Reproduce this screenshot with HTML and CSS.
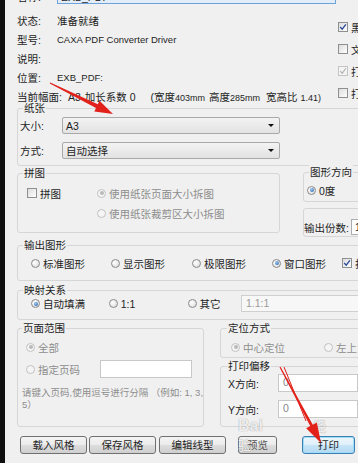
FILE: index.html
```html
<!DOCTYPE html>
<html lang="zh-CN">
<head>
    <meta charset="UTF-8">
    <meta name="viewport" content="width=device-width, initial-scale=1.0">
    <title>打印</title>
    <link rel="stylesheet" href="styles.css">
</head>
<body>
    <div class="dialog">
        <div class="info-band">
            <div class="info">
                <div class="row name-row"><span class="lbl">名称:</span><div class="name-box">EXB_PDF</div></div>
                <div class="row"><span class="lbl">状态:</span><span>准备就绪</span></div>
                <div class="row"><span class="lbl">型号:</span><span class="latin">CAXA PDF Converter Driver</span></div>
                <div class="row"><span class="lbl">说明:</span></div>
                <div class="row"><span class="lbl">位置:</span><span class="latin">EXB_PDF:</span></div>
                <div class="row size-row">
                    <span>当前幅面:</span>
                    <span class="s-a">A3</span>
                    <span class="s-b">加长系数 0</span>
                    <span class="s-c">(宽度<span class="num">403mm</span></span>
                    <span class="s-d">高度<span class="num">285mm</span></span>
                    <span class="s-e">宽高比 <span class="num">1.41)</span></span>
                </div>
            </div>
            <div class="side-checks">
                <div class="chk-row"><span class="chk on"><svg viewBox="0 0 10 10" width="8" height="8"><path d="M1.5 5 L4 7.8 L8.6 1.6" fill="none" stroke="#2c4a9a" stroke-width="1.6"/></svg></span>黑白打印</div>
                <div class="chk-row"><span class="chk"></span>文字作为填充</div>
                <div class="chk-row"><span class="chk dis on"><svg viewBox="0 0 10 10" width="8" height="8"><path d="M1.5 5 L4 7.8 L8.6 1.6" fill="none" stroke="#b0b0b0" stroke-width="1.4"/></svg></span>打印尺寸标识</div>
                <div class="chk-row"><span class="chk"></span>打印到文件</div>
            </div>
        </div>

        <div class="group paper">
            <div class="group-title">纸张</div>
            <div class="field-row"><span class="flbl">大小:</span><div class="select"><span>A3</span><span class="caret"></span></div></div>
            <div class="field-row"><span class="flbl">方式:</span><div class="select"><span>自动选择</span><span class="caret"></span></div></div>
        </div>

        <div class="row-c">
            <div class="group tile">
                <div class="group-title">拼图</div>
                <div class="tile-grid">
                    <div class="opt"><span class="chk"></span>拼图</div>
                    <div class="opt muted"><span class="radio dis on"></span>使用纸张页面大小拆图</div>
                    <div></div>
                    <div class="opt muted"><span class="radio dis"></span>使用纸张裁剪区大小拆图</div>
                </div>
            </div>
            <div class="right-c">
                <div class="group orient">
                    <div class="group-title">图形方向</div>
                    <div class="opt orient-row"><span class="radio on"></span>0度</div>
                </div>
                <div class="group copies">
                    <div class="opt"><span>输出份数:</span><span class="copies-box">1</span></div>
                </div>
            </div>
        </div>

        <div class="group out">
            <div class="group-title">输出图形</div>
            <div class="opts">
                <div class="opt w80"><span class="radio"></span>标准图形</div>
                <div class="opt w81"><span class="radio"></span>显示图形</div>
                <div class="opt w80"><span class="radio"></span>极限图形</div>
                <div class="opt w70"><span class="radio on"></span>窗口图形</div>
                <div class="opt"><span class="chk on"><svg viewBox="0 0 10 10" width="8" height="8"><path d="M1.5 5 L4 7.8 L8.6 1.6" fill="none" stroke="#2c4a9a" stroke-width="1.6"/></svg></span>打印</div>
            </div>
        </div>

        <div class="group map">
            <div class="group-title">映射关系</div>
            <div class="opts">
                <div class="opt w80"><span class="radio on"></span>自动填满</div>
                <div class="opt w81"><span class="radio"></span>1:1</div>
                <div class="opt w55"><span class="radio"></span>其它</div>
                <div class="text-box dis">1.1:1</div>
            </div>
        </div>

        <div class="row-f">
            <div class="group range">
                <div class="group-title">页面范围</div>
                <div class="opt range-row muted"><span class="radio dis on"></span>全部</div>
                <div class="opt range-row2 muted"><span class="radio dis"></span><span class="w58">指定页码</span><span class="text-box page-box"></span></div>
                <div class="hint">请键入页码,使用逗号进行分隔 （例如: 1, 3,<br>5）</div>
            </div>
            <div class="right-f">
                <div class="group locate">
                    <div class="group-title">定位方式</div>
                    <div class="opts locate-row muted">
                        <div class="opt w93"><span class="radio dis on"></span>中心定位</div>
                        <div class="opt"><span class="radio dis"></span>左上角定位</div>
                    </div>
                </div>
                <div class="group offset">
                    <div class="group-title">打印偏移</div>
                    <div class="off-row"><span class="olbl">X方向:</span><span class="text-box off-box">0</span></div>
                    <div class="off-row"><span class="olbl">Y方向:</span><span class="text-box off-box">0</span></div>
                </div>
            </div>
        </div>

        <div class="buttons">
            <div class="btn b-load">载入风格</div>
            <div class="btn b-save">保存风格</div>
            <div class="btn b-edit">编辑线型</div>
            <div class="btn b-view">预览</div>
            <div class="btn b-print">打印</div>
        </div>
    </div>

    <div class="watermark"><span class="wm-bai">Bai</span><span class="wm-exp">经验</span></div>

    <svg class="arrows" width="358" height="463" viewBox="0 0 358 463">
        <polygon fill="#e3211b" points="50.2,82.6 97.8,104.3 99.5,100.7 113,114 94.3,111.5 96,107.9 49.8,83.4"/>
        <polygon fill="#e3211b" points="280.5,366.7 312.8,424.7 316.8,422.6 321,443 306.2,428.3 310.2,426.1 279.5,367.3"/>
        <line x1="284" y1="367" x2="306" y2="421" stroke="#e3211b" stroke-width="1"/>
    </svg>
</body>
</html>
```

FILE: styles.css
```css
* {
    box-sizing: border-box;
}
body {
    margin: 0;
    position: relative;
    background: #f0f0f0;
    font-family: "Liberation Sans", "Noto Sans CJK SC", sans-serif;
    font-size: 10.5px;
    color: #1e1e1e;
}
.dialog {
    width: 358px;
    height: 463px;
    overflow: hidden;
    border-left: 5px solid #0f0f0f;
    padding-left: 12px;
    white-space: nowrap;
}
.info-band {
    display: grid;
    grid-template-columns: 321px 1fr;
    margin-top: -10px;
}
.row {
    display: flex;
    align-items: center;
    height: 19px;
}
.name-row {
    height: 21px;
    align-items: flex-start;
}
.name-row .lbl {
    line-height: 14px;
}
.lbl {
    width: 40px;
    flex: none;
}
.latin {
    font-size: 9.5px;
}
.name-box {
    width: 279px;
    height: 14px;
    border: 1px solid #6da3da;
    background: #e2edf9;
    line-height: 12px;
    padding-left: 3px;
}
.size-row .s-a { margin-left: 6px; }
.size-row .s-b { margin-left: 4px; }
.size-row .s-c { margin-left: 15px; }
.size-row .s-d { margin-left: 4px; }
.size-row .s-e { margin-left: 6px; }
.num {
    font-size: 9px;
}

.side-checks {
    padding-top: 26px;
}
.chk-row {
    display: flex;
    align-items: center;
    gap: 3px;
    height: 22px;
}
.chk {
    width: 10px;
    height: 10px;
    flex: none;
    border: 1px solid #8e8f8f;
    background: linear-gradient(135deg, #dcdcdc, #ffffff);
    display: flex;
    align-items: center;
    justify-content: center;
}
.chk.dis {
    border-color: #c4c4c4;
    background: #f4f4f4;
}
.radio {
    width: 9px;
    height: 9px;
    flex: none;
    position: relative;
    border-radius: 50%;
    border: 1px solid #8a8a8a;
    background: radial-gradient(circle at 35% 35%, #ffffff, #d8d8d8);
}
.radio.on::after {
    content: "";
    position: absolute;
    top: 1.5px;
    left: 1.5px;
    width: 4px;
    height: 4px;
    border-radius: 50%;
    background: radial-gradient(circle at 40% 35%, #9cc9f0, #1d5aa6);
}
.radio.dis {
    border-color: #c2c2c2;
    background: #f5f5f5;
}
.radio.dis.on::after {
    background: #b9b9b9;
}
.opt {
    display: flex;
    align-items: center;
    gap: 3px;
    height: 16px;
}
.muted {
    color: #8d8d8d;
}

.group {
    border: 1px solid #d6d6d6;
    border-radius: 3px;
}
.group-title {
    display: table;
    margin: -8px 0 0 5px;
    padding: 0 1px;
    line-height: 14px;
    background: #f0f0f0;
}

.paper {
    margin-top: 2px;
    margin-right: -30px;
    height: 58px;
}
.field-row {
    display: flex;
    align-items: center;
    height: 17px;
    margin-top: 2px;
    padding-left: 2px;
}
.field-row + .field-row {
    margin-top: 8px;
}
.flbl {
    width: 42px;
}
.select {
    width: 218px;
    height: 17px;
    border: 1px solid #a9a9a9;
    border-radius: 2px;
    background: linear-gradient(#f3f3f3, #e2e2e2);
    padding: 0 5px 0 3px;
    display: flex;
    align-items: center;
    justify-content: space-between;
}
.caret {
    width: 0;
    height: 0;
    border-left: 3px solid transparent;
    border-right: 3px solid transparent;
    border-top: 3px solid #111;
}

.row-c {
    display: flex;
    align-items: flex-start;
    margin-top: 7px;
}
.tile {
    width: 263px;
    height: 60px;
}
.tile-grid {
    display: grid;
    grid-template-columns: 70px auto;
    row-gap: 4px;
    margin-top: 5px;
    padding-left: 9px;
}
.right-c {
    flex: 1;
    margin-left: 23px;
    margin-top: -1px;
    margin-right: -30px;
}
.orient {
    height: 30px;
}
.orient-row {
    margin-top: 4px;
    height: 14px;
    padding-left: 3px;
}
.copies {
    height: 29px;
    margin-top: 6px;
    padding-top: 10px;
}
.copies .opt {
    gap: 2px;
}
.copies-box {
    width: 30px;
    height: 16px;
    border: 1px solid #abadb3;
    background: #fff;
    padding-left: 3px;
    line-height: 14px;
}

.out {
    margin-top: 8px;
    height: 36px;
    margin-right: -30px;
}
.opts {
    display: flex;
    margin-top: 3px;
    padding-left: 13px;
    height: 16px;
}
.w55 { width: 55px; }
.w58 { width: 58px; }
.w70 { width: 70px; }
.w80 { width: 80px; }
.w81 { width: 81px; }
.w93 { width: 93px; }

.map {
    margin-top: 9px;
    height: 30px;
    margin-right: -30px;
}
.map .opts {
    margin-top: -2px;
    height: 17px;
    align-items: center;
}
.text-box {
    height: 17px;
    border: 1px solid #abadb3;
    background: #fff;
    padding-left: 4px;
    line-height: 15px;
}
.text-box.dis {
    width: 150px;
    border-color: #cfcfcf;
    background: #f7f7f7;
    color: #9a9a9a;
}

.row-f {
    display: flex;
    align-items: flex-start;
    margin-top: 8px;
}
.range {
    width: 205px;
    height: 99px;
}
.range .group-title {
    margin-left: 4px;
}
.range-row {
    margin-top: 4px;
    padding-left: 8px;
}
.range-row2 {
    margin-top: 5px;
    height: 18px;
    padding-left: 8px;
}
.page-box {
    width: 92px;
    height: 18px;
    margin-left: 1px;
    border-color: #c8c8c8;
}
.hint {
    margin-top: 9px;
    padding-left: 4px;
    font-size: 9.5px;
    line-height: 12px;
    color: #8d8d8d;
}
.right-f {
    flex: 1;
    margin-left: 16px;
    margin-right: -30px;
}
.locate {
    height: 30px;
}
.locate .group-title,
.offset .group-title {
    margin-left: 6px;
}
.locate-row {
    margin-top: 4px;
    padding-left: 10px;
}
.offset {
    margin-top: 8px;
    height: 61px;
}
.off-row {
    display: flex;
    align-items: center;
    height: 18px;
    margin-top: 1px;
    padding-left: 7px;
}
.off-row + .off-row {
    margin-top: 8px;
}
.olbl {
    width: 50px;
}
.off-box {
    width: 80px;
    height: 18px;
    color: #888;
    border-color: #c8c8c8;
}

.buttons {
    display: flex;
    margin-top: 9px;
    height: 18px;
}
.btn {
    height: 18px;
    border: 1px solid #707070;
    border-radius: 3px;
    background: linear-gradient(#f4f4f4 0%, #ebebeb 50%, #dddddd 51%, #cfcfcf 100%);
    text-align: center;
    line-height: 16px;
}
.b-load { width: 67px; margin-left: 3px; }
.b-save { width: 67px; margin-left: 2px; }
.b-edit { width: 67px; margin-left: 3px; }
.b-view { width: 39px; margin-left: 12px; color: #555; }
.b-print {
    width: 53px;
    margin-left: 25px;
    border-color: #3c7fb1;
    box-shadow: inset 0 0 0 1px #9fdcfa;
    background: linear-gradient(#eef7fd 0%, #deeffa 50%, #c7e4f7 51%, #b3d9f2 100%);
}

.watermark {
    position: absolute;
    left: 238px;
    top: 416px;
    width: 100px;
    color: rgba(255, 255, 255, 0.85);
    text-shadow: 0 0 1px rgba(0, 0, 0, 0.45);
    font-weight: bold;
    pointer-events: none;
}
.wm-bai {
    font-size: 16px;
}
.wm-exp {
    margin-left: 50px;
    font-size: 13px;
}
.arrows {
    position: absolute;
    top: 0;
    left: 0;
    pointer-events: none;
}
```
